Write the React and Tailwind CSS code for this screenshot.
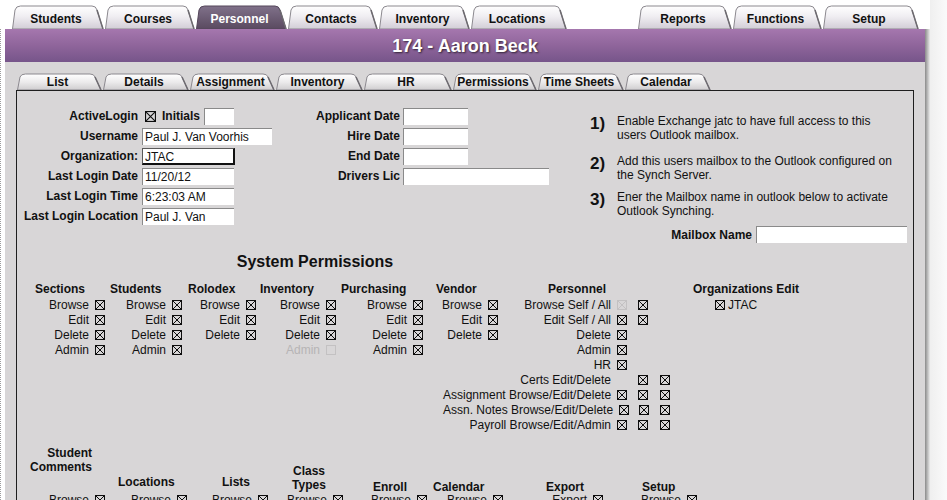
import React from 'react';

function Box({ x = true, dim = false, size = 10 }) {
  const c = dim ? '#c3c1c2' : '#0d0d0d';
  return (
    <svg width={size} height={size} viewBox="0 0 10 10" className="shrink-0">
      <rect x="0.5" y="0.5" width="9" height="9" fill="none" stroke={c} strokeWidth="1" />
      {x && <path d="M1 1L9 9M9 1L1 9" stroke={c} strokeWidth="1" />}
    </svg>
  );
}

function Tab({ label, w, h, active, small }) {
  const k = small ? 4 : 5;
  const d = `M0.5 ${h} L3 ${k} Q4 1 8.5 1 L${w - 13} 1 Q${w - 9} 1 ${w - 8} ${k} L${w - 2} ${h} Z`;
  const fill = active && !small ? 'url(#tabDark)' : small ? 'url(#subLight)' : 'url(#tabLight)';
  return (
    <div className="relative flex shrink-0 items-center justify-center" style={{ width: w, height: h }}>
      <svg className="absolute inset-0" width={w} height={h}>
        <defs>
          <linearGradient id="tabLight" x1="0" y1="0" x2="0" y2="1">
            <stop offset="0" stopColor="#ffffff" />
            <stop offset="0.45" stopColor="#f0eef2" />
            <stop offset="1" stopColor="#d2cdd6" />
          </linearGradient>
          <linearGradient id="tabDark" x1="0" y1="0" x2="0" y2="1">
            <stop offset="0" stopColor="#80718a" />
            <stop offset="1" stopColor="#5a4a60" />
          </linearGradient>
          <linearGradient id="subLight" x1="0" y1="0" x2="0" y2="1">
            <stop offset="0" stopColor="#ffffff" />
            <stop offset="0.5" stopColor="#ecebec" />
            <stop offset="1" stopColor="#cfcdcf" />
          </linearGradient>
        </defs>
        <path d={d} fill={fill} stroke={active && !small ? '#54465a' : '#8b888e'} strokeWidth="1" />
        <path d={`M${w - 8} ${k} L${w - 2} ${h}`} stroke="#6d6a70" strokeWidth="1.5" fill="none" />
      </svg>
      <span className={`relative pr-[5px] text-[12px] font-bold ${small ? 'pt-[1px] leading-[17px]' : 'pt-[3px]'} ${active && !small ? 'text-white' : 'text-[#111]'}`}>
        {label}
      </span>
    </div>
  );
}

function Field({ w, value, strong }) {
  return (
    <div
      className={`h-[17px] bg-white pl-[2px] text-[12px] leading-[16px] ${w} ${
        strong
          ? 'border-t border-l border-[#5a5a5a] border-r-2 border-b-2 border-r-[#111] border-b-[#111]'
          : 'border-t border-l border-[#8a8a8a]'
      }`}
    >
      {value}
    </div>
  );
}

function Row({ label, dim, empty }) {
  return (
    <div className="flex h-[15px] items-center justify-end whitespace-nowrap">
      <span className={dim ? 'text-[#b6b4b5]' : ''}>{label}</span>
      <span className="ml-[6px] flex">
        <Box x={!empty} dim={dim} />
      </span>
    </div>
  );
}

function PRow({ label, a, b, c }) {
  return (
    <div className="flex h-[15px] items-center">
      <span className="flex-1 whitespace-nowrap pr-[6px] text-right">{label}</span>
      <span className="flex w-[21px]">{a && <Box dim={a === 'dim'} />}</span>
      <span className="flex w-[22px]">{b && <Box />}</span>
      <span className="flex w-[10px]">{c && <Box />}</span>
    </div>
  );
}

const Head = ({ children, className = '' }) => (
  <div className={`h-[16px] whitespace-nowrap font-bold leading-[16px] ${className}`}>{children}</div>
);

export default function App() {
  const topLeft = [
    ['Students', 93],
    ['Courses', 91],
    ['Personnel', 92, true],
    ['Contacts', 91],
    ['Inventory', 92],
    ['Locations', 97],
  ];
  const topRight = [
    ['Reports', 95],
    ['Functions', 90],
    ['Setup', 97],
  ];
  const subTabs = [
    ['List', 86],
    ['Details', 87],
    ['Assignment', 86],
    ['Inventory', 88],
    ['HR', 89],
    ['Permissions', 85, true],
    ['Time Sheets', 87],
    ['Calendar', 87],
  ];

  return (
    <div className="flex h-[500px] w-[947px] overflow-hidden bg-white font-['Liberation_Sans',Arial,Helvetica,sans-serif] text-[12px] text-[#111]">
      <div className="flex w-[930px] shrink-0 flex-col">
        {/* top tabs */}
        <div className="flex h-[29px] shrink-0 items-end pl-[12px]">
          {topLeft.map(([l, w, a]) => (
            <Tab key={l} label={l} w={w} h={24} active={a} />
          ))}
          <div className="w-[70px] shrink-0" />
          {topRight.map(([l, w]) => (
            <Tab key={l} label={l} w={w} h={24} />
          ))}
        </div>

        <div className="flex h-[471px] shrink-0">
          <div className="w-[5px] border-l border-dotted border-[#9c9c9c]" />
          <div className="w-[920px]">
            <div className="flex h-[33px] items-center justify-center bg-linear-to-b from-[#a577ae] via-[#8f659b] to-[#76558a] pt-[1px] text-[18px] font-bold text-white [text-shadow:1px_1px_2px_rgba(0,0,0,0.65)]">
              174 - Aaron Beck
            </div>

            <div className="h-[438px] bg-[#d8d6d7] px-[11px] pt-[11px]">
              <div className="flex h-[17px] pl-[1px]">
                {subTabs.map(([l, w, a]) => (
                  <Tab key={l} label={l} w={w} h={17} active={a} small />
                ))}
              </div>

              <div className="h-[430px] border border-[#1e1e1e] pt-[15px]">
                {/* form */}
                <div className="flex h-[139px]">
                  <div className="grid w-[270px] grid-cols-[121px_1fr] content-start gap-x-[4px]">
                    <div className="flex h-[20px] items-center justify-end font-bold">ActiveLogin</div>
                    <div className="flex h-[20px] items-center">
                      <span className="ml-[3px] flex">
                        <Box size={11} />
                      </span>
                      <span className="ml-[6px] font-bold">Initials</span>
                      <span className="ml-[4px]">
                        <Field w="w-[30px]" value="" />
                      </span>
                    </div>
                    <div className="flex h-[20px] items-center justify-end font-bold">Username</div>
                    <div className="flex h-[20px] items-center">
                      <Field w="w-[130px]" value="Paul J. Van Voorhis" />
                    </div>
                    <div className="flex h-[20px] items-center justify-end font-bold">Organization:</div>
                    <div className="flex h-[20px] items-center">
                      <Field w="w-[93px]" value="JTAC" strong />
                    </div>
                    <div className="flex h-[20px] items-center justify-end font-bold">Last Login Date</div>
                    <div className="flex h-[20px] items-center">
                      <Field w="w-[92px]" value="11/20/12" />
                    </div>
                    <div className="flex h-[20px] items-center justify-end font-bold">Last Login Time</div>
                    <div className="flex h-[20px] items-center">
                      <Field w="w-[92px]" value="6:23:03 AM" />
                    </div>
                    <div className="flex h-[20px] items-center justify-end whitespace-nowrap font-bold">Last Login Location</div>
                    <div className="flex h-[20px] items-center">
                      <Field w="w-[92px]" value="Paul J. Van" />
                    </div>
                  </div>

                  <div className="grid w-[262px] grid-cols-[113px_1fr] content-start gap-x-[3px]">
                    <div className="flex h-[20px] items-center justify-end font-bold">Applicant Date</div>
                    <div className="flex h-[20px] items-center">
                      <Field w="w-[65px]" value="" />
                    </div>
                    <div className="flex h-[20px] items-center justify-end font-bold">Hire Date</div>
                    <div className="flex h-[20px] items-center">
                      <Field w="w-[65px]" value="" />
                    </div>
                    <div className="flex h-[20px] items-center justify-end font-bold">End Date</div>
                    <div className="flex h-[20px] items-center">
                      <Field w="w-[65px]" value="" />
                    </div>
                    <div className="flex h-[20px] items-center justify-end font-bold">Drivers Lic</div>
                    <div className="flex h-[20px] items-center">
                      <Field w="w-[146px]" value="" />
                    </div>
                  </div>

                  <div className="ml-[41px] mt-[8px] w-[317px] leading-[14px]">
                    <div className="flex">
                      <span className="mt-[2px] w-[27px] text-[17px] font-bold leading-[16px]">1)</span>
                      <span>
                        Enable Exchange jatc to have full access to this
                        <br />
                        users Outlook mailbox.
                      </span>
                    </div>
                    <div className="mt-[12px] flex">
                      <span className="mt-[2px] w-[27px] text-[17px] font-bold leading-[16px]">2)</span>
                      <span>
                        Add this users mailbox to the Outlook configured on
                        <br />
                        the Synch Server.
                      </span>
                    </div>
                    <div className="mt-[8px] flex">
                      <span className="mt-[2px] w-[27px] text-[17px] font-bold leading-[16px]">3)</span>
                      <span>
                        Ener the Mailbox name in outlook below to activate
                        <br />
                        Outlook Synching.
                      </span>
                    </div>
                    <div className="mt-[8px] flex items-center justify-end">
                      <span className="font-bold">Mailbox Name</span>
                      <span className="ml-[4px]">
                        <Field w="w-[151px]" value="" />
                      </span>
                    </div>
                  </div>
                </div>

                {/* system permissions */}
                <div className="ml-[17px] mt-[7px] w-[562px] text-center text-[16px] font-bold leading-[20px]">
                  System Permissions
                </div>

                <div className="mt-[9px] flex items-start pl-[18px]">
                  <div className="w-[70px]">
                    <Head>Sections</Head>
                    <Row label="Browse" />
                    <Row label="Edit" />
                    <Row label="Delete" />
                    <Row label="Admin" />
                  </div>
                  <div className="ml-[5px] w-[72px]">
                    <Head>Students</Head>
                    <Row label="Browse" />
                    <Row label="Edit" />
                    <Row label="Delete" />
                    <Row label="Admin" />
                  </div>
                  <div className="ml-[6px] w-[68px]">
                    <Head>Rolodex</Head>
                    <Row label="Browse" />
                    <Row label="Edit" />
                    <Row label="Delete" />
                  </div>
                  <div className="ml-[4px] w-[76px]">
                    <Head>Inventory</Head>
                    <Row label="Browse" />
                    <Row label="Edit" />
                    <Row label="Delete" />
                    <Row label="Admin" dim empty />
                  </div>
                  <div className="ml-[5px] w-[82px]">
                    <Head>Purchasing</Head>
                    <Row label="Browse" />
                    <Row label="Edit" />
                    <Row label="Delete" />
                    <Row label="Admin" />
                  </div>
                  <div className="ml-[13px] w-[62px]">
                    <Head>Vendor</Head>
                    <Row label="Browse" />
                    <Row label="Edit" />
                    <Row label="Delete" />
                  </div>
                  <div className="ml-[-55px] w-[227px]">
                    <Head className="pl-[105px]">Personnel</Head>
                    <PRow label="Browse Self / All" a="dim" b />
                    <PRow label="Edit Self / All" a b />
                    <PRow label="Delete" a />
                    <PRow label="Admin" a />
                    <PRow label="HR" a />
                    <PRow label="Certs Edit/Delete" b c />
                    <PRow label="Assignment Browse/Edit/Delete" a b c />
                    <PRow label="Assn. Notes Browse/Edit/Delete" a b c />
                    <PRow label="Payroll Browse/Edit/Admin" a b c />
                  </div>
                  <div className="ml-[23px]">
                    <Head>Organizations Edit</Head>
                    <div className="flex h-[15px] items-center pl-[22px]">
                      <Box />
                      <span className="ml-[3px]">JTAC</span>
                    </div>
                  </div>
                </div>

                {/* second permission row */}
                <div className="mt-[14px] flex items-end pl-[13px]">
                  <div className="w-[75px]">
                    <div className="mb-[18px] pr-[13px] text-right font-bold leading-[14px]">
                      Student
                      <br />
                      Comments
                    </div>
                    <Row label="Browse" />
                  </div>
                  <div className="ml-[13px] w-[69px]">
                    <div className="mb-[2px] font-bold leading-[15px]">Locations</div>
                    <Row label="Browse" />
                  </div>
                  <div className="ml-[26px] w-[55px]">
                    <div className="mb-[2px] pl-[9px] font-bold leading-[15px]">Lists</div>
                    <Row label="Browse" />
                  </div>
                  <div className="ml-[20px] w-[55px]">
                    <div className="w-[42px] text-center font-bold leading-[14px]">
                      Class
                      <br />
                      Types
                    </div>
                    <Row label="Browse" />
                  </div>
                  <div className="ml-[30px] w-[54px]">
                    <div className="font-bold leading-[10px]">Enroll</div>
                    <Row label="Browse" />
                  </div>
                  <div className="ml-[6px] w-[70px]">
                    <div className="font-bold leading-[10px]">Calendar</div>
                    <Row label="Browse" />
                  </div>
                  <div className="ml-[43px] w-[57px]">
                    <div className="font-bold leading-[10px]">Export</div>
                    <Row label="Export" />
                  </div>
                  <div className="ml-[39px] w-[55px]">
                    <div className="font-bold leading-[10px]">Setup</div>
                    <Row label="Browse" />
                  </div>
                </div>
              </div>
            </div>
          </div>
          <div className="w-[5px] bg-linear-to-r from-[#8a8a8a] to-[#ececec]" />
        </div>
      </div>
      <div className="flex-1 bg-linear-to-r from-[#efefef] to-[#fafafa]" />
    </div>
  );
}
